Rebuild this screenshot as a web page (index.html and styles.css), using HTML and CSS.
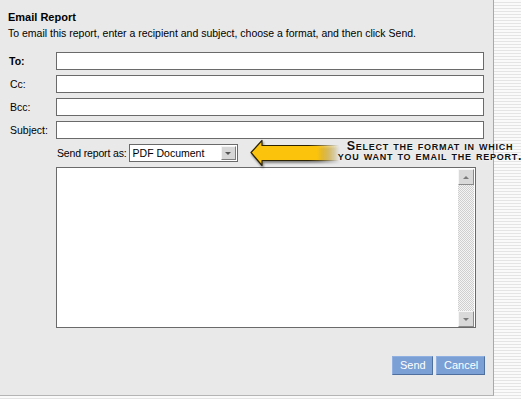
FILE: index.html
```html
<!DOCTYPE html>
<html>
<head>
<meta charset="utf-8">
<title>Email Report</title>
<link rel="stylesheet" href="styles.css">
</head>
<body>
<div class="page">
  <div class="panel">
    <h1 class="title">Email Report</h1>
    <p class="intro">To email this report, enter a recipient and subject, choose a format, and then click Send.</p>

    <div class="fields">
      <label class="lbl strong">To:</label><input class="txt" type="text">
      <label class="lbl">Cc:</label><input class="txt" type="text">
      <label class="lbl">Bcc:</label><input class="txt" type="text">
      <label class="lbl">Subject:</label><input class="txt" type="text">
    </div>

    <div class="format">
      <span class="lbl tight">Send report as:</span>
      <span class="zSelect">
        <span class="zSelect-text">PDF Document</span>
        <span class="zSelect-btn"><span class="tri-down"></span></span>
      </span>
    </div>

    <div class="msg">
      <div class="msg-area"></div>
      <div class="vscroll">
        <span class="sbtn"><span class="tri-up"></span></span>
        <span class="strack"></span>
        <span class="sbtn"><span class="tri-down"></span></span>
      </div>
    </div>

    <div class="actions">
      <button class="btn">Send</button>
      <button class="btn">Cancel</button>
    </div>
  </div>

  <!-- callout laid over the form -->
  <div class="callout">
    <svg class="arrow" width="92" height="29" viewBox="0 0 92 29">
      <defs>
        <linearGradient id="fillFade" x1="0" x2="1" y1="0" y2="0">
          <stop offset="0" stop-color="#fcc30d"/>
          <stop offset="0.75" stop-color="#fcc30d"/>
          <stop offset="1" stop-color="#fcc30d" stop-opacity="0"/>
        </linearGradient>
        <linearGradient id="edgeFade" x1="0" x2="1" y1="0" y2="0">
          <stop offset="0" stop-color="#2c2200"/>
          <stop offset="0.65" stop-color="#2c2200"/>
          <stop offset="1" stop-color="#2c2200" stop-opacity="0"/>
        </linearGradient>
      </defs>
      <path d="M2 13.5 L13 1.5 L13 6.5 L90 6.5 L90 21.5 L13 21.5 L13 26.5 Z" fill="url(#fillFade)" stroke="url(#edgeFade)" stroke-width="1.2" stroke-linejoin="round"/>
    </svg>
    <div class="callout-text">Select the format in which<br>you want to email the report.</div>
  </div>
</div>
</body>
</html>
```

FILE: styles.css
```css
body {
	margin: 0;
	font-size: 10.5px;
	line-height: 13px;
	font-family: "Liberation Sans", Arial, sans-serif;
	color: #000;
	background: repeating-linear-gradient(#fafafa 0 2px, #e4e4e4 2px 3px);
}
.page {
	position: relative;
	width: 521px;
	height: 399px;
	overflow: hidden;
}
.panel {
	width: 493px;
	height: 395px;
	background: #e9e9e9;
	border-right: 1px solid #a9a9a9;
	border-bottom: 1px solid #b4b4b4;
	box-sizing: content-box;
}
.title {
	margin: 0;
	padding: 11px 0 0 8px;
	font-size: 11px;
	line-height: 13px;
	font-weight: bold;
}
.intro {
	margin: 3px 0 0 8px;
}
.fields {
	display: grid;
	grid-template-columns: 46px 428px;
	row-gap: 5px;
	align-items: center;
	margin-top: 12px;
	padding-left: 10px;
}
.lbl { white-space: nowrap; }
.lbl.strong { font-weight: bold; margin-left: -1px; }
.lbl.tight { letter-spacing: -0.15px; }
.txt {
	margin: 0;
	height: 18px;
	padding: 0 2px;
	box-sizing: border-box;
	background: #fff;
	border: 1px solid #6a6a6a;
	font: inherit;
}
.format {
	display: flex;
	align-items: center;
	gap: 2px;
	margin: 5px 0 0 57px;
}
.zSelect {
	position: relative;
	display: flex;
	align-items: center;
	width: 109px;
	height: 18px;
	box-sizing: border-box;
	background: #fff;
	border: 1px solid #6a6a6a;
}
.zSelect-text { padding-left: 3px; }
.zSelect-btn {
	position: absolute;
	right: 1px;
	top: 1px;
	width: 15px;
	height: 14px;
	box-sizing: border-box;
	background: #d6d6d6;
	border: 1px solid;
	border-color: #f4f4f4 #7c7c7c #7c7c7c #f4f4f4;
	display: flex;
	align-items: center;
	justify-content: center;
}
.tri-down, .tri-up {
	width: 0;
	height: 0;
	border-left: 3px solid transparent;
	border-right: 3px solid transparent;
}
.tri-down { border-top: 3px solid #555; }
.tri-up { border-bottom: 3px solid #7a7a7a; }
.msg {
	display: flex;
	width: 420px;
	height: 161px;
	margin: 5px 0 0 56px;
	box-sizing: border-box;
	border: 1px solid #6a6a6a;
	background: #fff;
}
.msg-area { flex: 1; }
.vscroll {
	display: flex;
	flex-direction: column;
	width: 16px;
	padding: 1px 1px 0 0;
}
.sbtn {
	display: flex;
	align-items: center;
	justify-content: center;
	height: 16px;
	box-sizing: border-box;
	background: #d9d9d9;
	border: 1px solid;
	border-color: #f6f6f6 #8a8a8a #8a8a8a #f6f6f6;
}
.sbtn .tri-down { border-top-color: #7a7a7a; }
.strack {
	flex: 1;
	background: repeating-conic-gradient(#cfcfcf 0 25%, #f4f4f4 0 50%) 0 0 / 2px 2px;
}
.actions {
	display: flex;
	justify-content: flex-end;
	gap: 3px;
	margin-top: 28px;
	padding-right: 8px;
}
.btn {
	margin: 0;
	height: 19px;
	padding: 0 7px;
	font: inherit;
	font-size: 11px;
	color: #fff;
	background: #7ba0d6;
	border: 1px solid;
	border-color: #8fb0e0 #4f6f9f #4f6f9f #8fb0e0;
}
.btn:first-child { width: 41px; }
.btn:last-child { width: 49px; }
.callout {
	position: absolute;
	left: 249px;
	top: 139px;
	display: flex;
	align-items: center;
}
.arrow {
	filter: drop-shadow(1px 2px 1px rgba(0,0,0,0.45));
}
.callout-text {
	margin: -5px 0 0 -8px;
	width: 194px;
	text-align: center;
	font-variant: small-caps;
	font-weight: bold;
	font-size: 12.5px;
	line-height: 10px;
	letter-spacing: 0.75px;
	white-space: nowrap;
	color: #111;
	text-shadow: 0 0 2px #fff;
}
```
